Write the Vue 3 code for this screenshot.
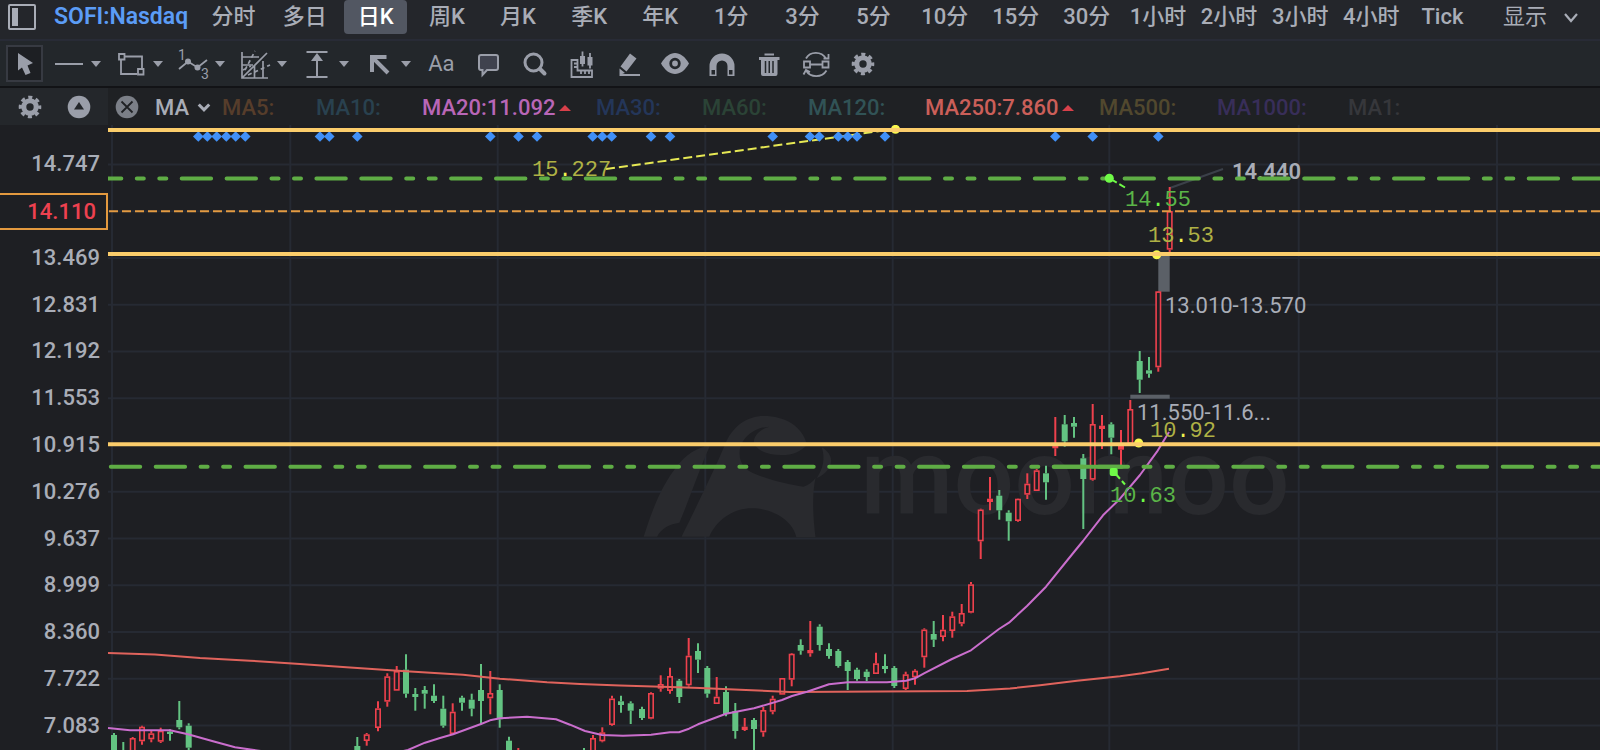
<script setup>
import { ref } from 'vue'

const periods = ['分时', '多日', '日K', '周K', '月K', '季K', '年K', '1分', '3分', '5分', '10分', '15分', '30分', '1小时', '2小时', '3小时', '4小时', 'Tick']
const activePeriod = ref('日K')

const shapeTools = [
  { id: 'line', label: 'Line' },
  { id: 'rect', label: 'Rectangle' },
  { id: 'wave', label: 'Wave' },
  { id: 'gann', label: 'Gann box' },
  { id: 'measure', label: 'Measure' },
  { id: 'arrow', label: 'Arrow' }
]
const actionTools = [
  { id: 'comment', label: 'Comment' },
  { id: 'search', label: 'Zoom' },
  { id: 'ruler', label: 'Ruler' },
  { id: 'pencil', label: 'Pencil' },
  { id: 'eye', label: 'Show drawings' },
  { id: 'magnet', label: 'Magnet' },
  { id: 'trash', label: 'Delete' },
  { id: 'sync', label: 'Sync drawings' },
  { id: 'gear', label: 'Drawing settings' }
]

const averages = [
  { text: 'MA5:', tone: 'ma5' },
  { text: 'MA10:', tone: 'ma10' },
  { text: 'MA20:11.092', tone: 'ma20', up: true },
  { text: 'MA30:', tone: 'ma30' },
  { text: 'MA60:', tone: 'ma60' },
  { text: 'MA120:', tone: 'ma120' },
  { text: 'MA250:7.860', tone: 'ma250', up: true },
  { text: 'MA500:', tone: 'ma500' },
  { text: 'MA1000:', tone: 'ma1000' },
  { text: 'MA1:', tone: 'ma1' }
]

const axis = ['14.747', '14.110', '13.469', '12.831', '12.192', '11.553', '10.915', '10.276', '9.637', '8.999', '8.360', '7.722', '7.083']
const currentPrice = '14.110'

const rows = axis.map((_, i) => 164.4 + i * 46.75)
const columns = [112, 290.3, 497.7, 705.3, 892.7, 1109.3, 1298.7, 1497]
const diamonds = [198.3, 207.3, 216.7, 226.3, 235.7, 245.3, 320, 329.3, 357.3, 490.3, 518.5, 537, 592.7, 602.3, 611.7, 651, 670, 772.7, 810, 819.3, 838.3, 847.7, 857, 885, 1055.3, 1092.7, 1158.3]

// kind (g: falling, r: rising, s: rising with a filled body), x, high, body top, body bottom, low
const candles = [
  ['g', 114, 733, 735, 756, 760], ['g', 123.3, 742, 750, 756, 760], ['r', 132.7, 737, 738, 756, 760],
  ['r', 142, 725.7, 726.7, 741.3, 744.7], ['r', 151.3, 730, 733.3, 739.3, 742.3], ['r', 160.7, 727.7, 730.7, 741.7, 743],
  ['g', 170, 729.3, 731.7, 734, 740.7], ['g', 179.3, 701, 720, 727.3, 729.3], ['g', 188.7, 723.3, 725.7, 747.7, 751],
  ['g', 357.3, 737, 746, 756, 760], ['r', 366.7, 733, 734.3, 741, 745.7], ['r', 378, 701.3, 708.3, 728, 731.3],
  ['r', 387.3, 673.3, 676.3, 701.7, 706.7], ['r', 396.7, 666, 671, 690.7, 690.7], ['g', 406, 654.3, 669.7, 693.7, 697.7],
  ['g', 415.3, 688, 694, 697, 710.7], ['g', 424.7, 686, 690, 693.7, 708.7], ['g', 434, 684.3, 695.7, 701, 703],
  ['g', 443.3, 695.7, 708.7, 725.7, 727.7], ['r', 452.7, 703.3, 711.7, 734, 734], ['g', 462, 695.7, 697.7, 702.7, 710.7],
  ['g', 471.7, 693.7, 699.7, 708.7, 716.3], ['g', 481, 664, 690, 701, 724.7], ['r', 490.3, 671, 693, 698.3, 714.3],
  ['g', 499.7, 684.3, 690, 719.3, 727.7], ['g', 509, 736.7, 740.7, 756, 760], ['r', 518.3, 748, 753, 758, 760],
  ['g', 584, 748, 753, 758, 760], ['r', 593, 735, 738, 756, 760], ['r', 602.3, 727.3, 732.3, 741.3, 742.3],
  ['r', 612, 695.7, 698.5, 725, 725.7], ['g', 621, 695.7, 701.3, 705, 712.7], ['g', 630.7, 701.3, 703.3, 710.7, 724],
  ['g', 642, 706.7, 709, 718, 720], ['r', 651, 692.3, 693, 718.7, 719.3], ['r', 660.7, 675.3, 684, 688.7, 691.7],
  ['r', 670, 667.7, 676, 691, 693.7], ['g', 679.3, 679, 680.7, 697, 703], ['r', 688.7, 638, 655.7, 685.3, 686.7],
  ['g', 698, 643.3, 651, 659.7, 673], ['g', 707.3, 666, 668, 693.7, 697.7], ['r', 716.7, 677, 696.7, 704, 704],
  ['g', 726, 686.3, 692, 714, 716.3], ['g', 735.3, 703, 711, 731, 738.7], ['s', 744.7, 718, 726.7, 730, 731],
  ['g', 754, 718, 720, 729, 750], ['r', 763.3, 707, 710, 732.3, 736.7], ['r', 772.7, 695.7, 698.7, 711.7, 714.3],
  ['r', 782.3, 678, 678, 694.7, 694.7], ['r', 791.7, 653, 653.7, 679.7, 686.3], ['g', 800.7, 639.3, 645, 650.7, 654.7],
  ['s', 810.3, 621, 650, 653.3, 656.7], ['g', 819.7, 624.3, 626.7, 645, 650.7], ['g', 829, 643.3, 649, 656, 658.7],
  ['g', 838.3, 649, 651, 666, 667.7], ['g', 847.7, 660, 662, 671, 690], ['g', 857, 667.7, 669.7, 679, 680.7],
  ['g', 866.7, 669.3, 671.7, 677, 681], ['r', 876, 652.7, 663.3, 674, 674], ['g', 885, 654.3, 666, 669, 673.3],
  ['g', 894.3, 666, 668, 686, 688], ['r', 905.7, 671.7, 674.3, 689, 690], ['r', 915, 669.3, 670.7, 677.3, 684.7],
  ['r', 924.3, 628.3, 629.5, 657.3, 667.7], ['g', 933.7, 621, 634, 639.7, 647], ['r', 943, 615, 629.7, 637, 641.3],
  ['r', 952.3, 611.7, 616.3, 631, 637.7], ['r', 961.7, 604, 613, 623.7, 626.3], ['r', 971, 582, 584.3, 612.7, 613.3],
  ['r', 980.7, 508.7, 509.5, 541.3, 559], ['s', 990, 477, 498.7, 502, 510.3], ['g', 999.3, 490, 495.7, 510.3, 519.7],
  ['g', 1008.7, 510.3, 512.7, 521.3, 540.7], ['r', 1018, 498.5, 498.7, 521, 521.7], ['r', 1027.3, 473.3, 483.7, 494.7, 499],
  ['r', 1036.7, 469, 470.3, 491, 491], ['g', 1046, 465.7, 473.3, 482.3, 499.7], ['s', 1055.3, 417, 445, 448.3, 456],
  ['g', 1064.7, 415, 424.3, 441.3, 446.7], ['g', 1074, 417, 423, 426.7, 437.7], ['g', 1083.3, 454, 458.3, 479, 529],
  ['r', 1092.7, 404, 424, 479.7, 480.7], ['s', 1102, 415, 425.7, 429, 449], ['g', 1111.3, 422.3, 424.3, 437.7, 454.3],
  ['s', 1121, 430, 446, 449.7, 466.7], ['r', 1130.3, 400, 409, 444, 444], ['g', 1139.7, 351, 361, 379.7, 393],
  ['g', 1149, 357, 370.3, 373.7, 377.7], ['r', 1158.3, 291, 291.3, 367.3, 371.7], ['r', 1169.7, 187, 211, 249.7, 252.3]
]

const ma250 = '108,653 155,654.5 200,658 250,660.7 300,664 350,667.5 398,670.7 463,674.7 500,678.7 547,682.3 580,684 620,685.5 670,687 700,688 740,689.7 790,692 880,691.5 967,691 1010,688.5 1040,685.3 1077,680.7 1120,676.3 1142,673.3 1169,668.7'
const ma20 = '108,728 130,730.3 170,730.3 188,734.3 213,741.3 235,747.3 257,750.5 300,756 380,756 408,750 425,742.7 440,738 453,734.3 481,724 490,720.3 500,718.3 527,716.7 556,719.3 570,724.7 585,731 602,735 623,735.7 651,734.7 670,732.3 679,732.3 689,728.7 698,724.3 726,713.7 754,708.3 782,700 792,696 807,691.7 829,684.3 848,682.3 887,682.3 906,680.7 915,678.3 924,673.3 952,659 971,650.3 999,629 1009,622.7 1027,606 1046,586.7 1074,552 1083,541 1103,515.3 1120,498.7 1140,475 1157,451.7 1169,432'
</script>

<template>
  <div class="app">
    <svg class="defs" aria-hidden="true">
      <symbol id="i-cursor" viewBox="0 0 32 32"><path fill="currentColor" d="M9 5V22.500L13 19.500L16.500 27L21.500 25L18.500 17.500L24 15Z" /></symbol>
      <symbol id="i-line" viewBox="0 0 32 32"><path stroke="currentColor" stroke-width="2" d="M2 16H30" /></symbol>
      <symbol id="i-rect" viewBox="0 0 32 32">
        <g fill="none" stroke="currentColor" stroke-width="1.800"><path d="M10 8.500H27V21M22 26H6V12" /><path d="M4 6H9.500V11.500H4ZM23 21H28.500V26.500H23Z" /></g>
      </symbol>
      <symbol id="i-wave" viewBox="0 0 32 32">
        <path fill="none" stroke="currentColor" stroke-width="1.800" d="M2 21L11 13.500L20.500 19.500L30 12" />
        <circle cx="11" cy="13.500" r="3" fill="currentColor" /><circle cx="20.500" cy="19.500" r="3" fill="currentColor" />
      </symbol>
      <symbol id="i-gann" viewBox="0 0 32 32">
        <g fill="none" stroke="currentColor" stroke-width="1.700">
          <path d="M3 4V30H29M3 9H20M24 13V30M3 17H14M15.500 17V30M3 30L28 5" />
          <path stroke-dasharray="4 3" d="M6 22L16 3M9 27L31 17M4 22L12 18" />
        </g>
      </symbol>
      <symbol id="i-measure" viewBox="0 0 32 32"><path stroke="currentColor" stroke-width="2" d="M5.500 4H26.500M5.500 29H26.500M16 8V29" /><path fill="currentColor" d="M16 5L22 13H10Z" /></symbol>
      <symbol id="i-arrow" viewBox="0 0 32 32"><path fill="none" stroke="currentColor" stroke-width="4" d="M23.500 9H9V24M10 10L25 25" /></symbol>
      <symbol id="i-comment" viewBox="0 0 32 32"><path fill="#3f424e" stroke="currentColor" stroke-width="2" d="M9 7H24Q26 7 26 9V20Q26 22 24 22H15L10.500 27V22H9Q7 22 7 20V9Q7 7 9 7Z" /></symbol>
      <symbol id="i-search" viewBox="0 0 32 32"><circle cx="14.500" cy="14.500" r="8.500" fill="none" stroke="currentColor" stroke-width="3" /><path stroke="currentColor" stroke-width="4" stroke-linecap="round" d="M21 21L25.500 25.500" /></symbol>
      <symbol id="i-ruler" viewBox="0 0 32 32">
        <path fill="none" stroke="currentColor" stroke-width="1.800" d="M5.500 12H11.500V22.500H26V29H5.500ZM8 15.500H11M8 19H11M15 23V26M19 23V26M23 23V26M16.500 3.500V18.500M24 5V20.500" />
        <path fill="currentColor" d="M14 8H19V16H14ZM21.500 9H26.500V17.500H21.500Z" />
      </symbol>
      <symbol id="i-pencil" viewBox="0 0 32 32"><path fill="currentColor" d="M17 5.500L23.500 10.500L13.500 23.500L7.500 18.500ZM6.500 20.500L12 25L6.500 27ZM6.500 26H27V28H6.500Z" /></symbol>
      <symbol id="i-eye" viewBox="0 0 32 32">
        <path fill="currentColor" d="M2 15.500C6 8.500 11 5 16 5S26 8.500 30 15.500C26 22.500 21 26 16 26S6 22.500 2 15.500Z" />
        <circle cx="16" cy="15.500" r="4.300" fill="none" stroke="#23272b" stroke-width="2.800" />
      </symbol>
      <symbol id="i-magnet" viewBox="0 0 32 32">
        <path fill="currentColor" d="M3.500 28V18A12.500 12.500 0 0 1 28.500 18V28H21.500V18A5.500 5.500 0 0 0 10.500 18V28Z" />
        <path fill="#23272b" d="M5.500 22H9V26.500H5.500ZM23 22H26.500V26.500H23Z" />
      </symbol>
      <symbol id="i-trash" viewBox="0 0 32 32">
        <path fill="currentColor" d="M11.500 5.500H21V7.500H11.500ZM6 9H26.500V12H6ZM8 12H24.500V26Q24.500 28 22.500 28H10Q8 28 8 26Z" />
        <path stroke="#23272b" stroke-width="1.500" d="M12.500 13V25M16.250 13V25M20 13V25" />
      </symbol>
      <symbol id="i-sync" viewBox="0 0 32 32">
        <path fill="none" stroke="currentColor" stroke-width="1.800" d="M4 13.500H10V19.500H4ZM22.500 13.500H28.500V19.500H22.500ZM10 16.500H22.500M6 10.500C10 3 21.500 3 26 10.500M28.500 6V10.500H23.500M26.500 22.500C22 30 10.500 30 6 22.500M3.500 26.500L6 22L10 24" />
      </symbol>
      <symbol id="i-gear" viewBox="0 0 32 32">
        <circle cx="16" cy="16" r="6.200" fill="none" stroke="currentColor" stroke-width="5" />
        <circle cx="16" cy="16" r="9.600" fill="none" stroke="currentColor" stroke-width="3.400" stroke-dasharray="4 3.540" stroke-dashoffset="2" />
      </symbol>
      <symbol id="i-up" viewBox="0 0 32 32"><circle cx="16" cy="16" r="11.300" fill="currentColor" /><path fill="#24272b" d="M16 11L21 18.500H11Z" /></symbol>
      <symbol id="i-close" viewBox="0 0 32 32"><circle cx="16" cy="16" r="11.300" fill="#7b7f87" /><path stroke="#1f2124" stroke-width="1.800" d="M10.500 10.500L21.500 21.500M21.500 10.500L10.500 21.500" /></symbol>
      <symbol id="i-panel" viewBox="0 0 32 32"><rect x="3" y="4" width="26" height="24" rx="1" fill="none" stroke="currentColor" stroke-width="2" /><path fill="currentColor" d="M6 7H12V25H6Z" /></symbol>
    </svg>

    <header class="topbar">
      <div class="symbol">
        <button class="plain" aria-label="Toggle side panel"><svg class="icon"><use href="#i-panel" /></svg></button>
        <a href="#" class="ticker">SOFI:Nasdaq</a>
      </div>
      <nav class="periods" aria-label="Period">
        <button v-for="p in periods" :key="p" class="period" :class="{ active: p === activePeriod }" @click="activePeriod = p">{{ p }}</button>
      </nav>
      <button class="display">显示
        <svg class="chev" viewBox="0 0 16 16"><path fill="none" stroke="currentColor" stroke-width="2.200" d="M2 5L8 12L14 5" /></svg>
      </button>
    </header>

    <div class="tools" role="toolbar" aria-label="Drawing tools">
      <button class="cursor" aria-label="Select"><svg class="icon"><use href="#i-cursor" /></svg></button>
      <div class="shapes">
        <button v-for="t in shapeTools" :key="t.id" class="shape" :aria-label="t.label">
          <svg class="icon"><use :href="'#i-' + t.id" /></svg>
          <template v-if="t.id === 'wave'">
            <span class="wave-start">1</span>
            <span class="wave-end">3</span>
          </template>
          <span class="caret"></span>
        </button>
      </div>
      <div class="actions">
        <button class="action text-tool">Aa</button>
        <button v-for="t in actionTools" :key="t.id" class="action" :aria-label="t.label">
          <svg class="icon"><use :href="'#i-' + t.id" /></svg>
        </button>
      </div>
    </div>

    <div class="indicators">
      <div class="corner">
        <button class="plain" aria-label="Indicator settings"><svg class="icon"><use href="#i-gear" /></svg></button>
        <button class="plain" aria-label="Collapse"><svg class="icon"><use href="#i-up" /></svg></button>
      </div>
      <button class="plain close" aria-label="Remove indicator"><svg class="icon"><use href="#i-close" /></svg></button>
      <button class="kind">MA
        <svg class="chev" viewBox="0 0 16 16"><path fill="none" stroke="currentColor" stroke-width="3.500" d="M2 4L8 10L14 4" /></svg>
      </button>
      <div class="averages">
        <span v-for="a in averages" :key="a.text" :class="a.tone">{{ a.text }}<i v-if="a.up" class="up"></i></span>
      </div>
    </div>

    <main class="chart">
      <div class="axis">
        <div v-for="v in axis" :key="v" class="tick">
          <span :class="{ current: v === currentPrice }">{{ v }}</span>
        </div>
      </div>
      <svg class="plot" role="img" aria-label="SOFI daily chart">
        <g transform="translate(-108 -125)">
          <g class="grid">
            <line v-for="y in rows" :key="y" x1="108" :y1="y" x2="110%" :y2="y" />
            <line v-for="x in columns" :key="x" :x1="x" y1="125" :x2="x" y2="130%" />
          </g>

          <g class="mark">
            <g transform="translate(620 390) scale(0.4464 0.3333)">
              <path d="M53 440C70 370 90 290 130 225C148 195 170 174 202 166C180 230 155 330 133 398C112 402 92 415 83 440Z" />
              <path d="M235 165C250 110 285 78 322 78C370 78 410 110 419 165C402 187 385 196 360 195C332 193 310 186 300 160C298 140 312 118 335 110C300 112 270 145 268 185C266 225 285 243 303 252C335 270 380 285 411 290C422 285 432 276 438 264C430 310 432 380 438 442H395C388 395 345 355 295 355C250 355 215 395 200 440H138C160 380 208 250 235 165Z" />
              <path d="M452 172C470 185 478 210 470 228C463 248 452 258 441 264C455 236 460 205 452 172Z" />
            </g>
            <text x="1075" y="514" text-anchor="middle">moomoo</text>
          </g>

          <line class="pointer" x1="1170" y1="188" x2="1223" y2="169" />
          <text class="note strong" x="1232" y="179">14.440</text>

          <rect class="gap" x="1158.300" y="255" width="11.400" height="36.700" />
          <rect class="gap" x="1130.300" y="394.700" width="39.400" height="4" />

          <g v-for="c in candles" :key="c[1]" :class="c[0] === 'g' ? 'down' : 'rise'">
            <line v-if="c[3] > c[2]" :x1="c[1]" :y1="c[2]" :x2="c[1]" :y2="c[3]" />
            <line v-if="c[5] > c[4]" :x1="c[1]" :y1="c[4]" :x2="c[1]" :y2="c[5]" />
            <rect v-if="c[0] === 'r'" class="hollow" :x="c[1] - 2.2" :y="c[3] + 0.8" width="4.400" :height="c[4] - c[3] - 1.6" />
            <rect v-else class="solid" :x="c[1] - 3" :y="c[3]" width="6" :height="c[4] - c[3]" />
          </g>

          <polyline class="avg250" :points="ma250" />
          <polyline class="avg20" :points="ma20" />

          <text class="note" x="1165" y="313">13.010-13.570</text>
          <text class="note" x="1137" y="420">11.550-11.6...</text>

          <line class="yellow-dash" x1="606" y1="169" x2="895" y2="129" />
          <path v-for="x in diamonds" :key="x" class="diamond" :d="`M${x} 131.200L${x + 5.3} 136.500L${x} 141.800L${x - 5.3} 136.500Z`" />

          <g class="yellow-dot">
            <circle cx="895.500" cy="129.300" r="4.500" /><circle cx="1156.700" cy="254.700" r="4.500" /><circle cx="1138.700" cy="443" r="4.500" />
          </g>
          <line class="level" x1="108" y1="130" x2="110%" y2="130" />
          <line class="level" x1="108" y1="254" x2="110%" y2="254" />
          <line class="level" x1="108" y1="444.300" x2="110%" y2="444.300" />

          <line class="green" stroke-dashoffset="61" x1="108" y1="178.500" x2="110%" y2="178.500" />
          <line class="green" stroke-dashoffset="131.900" x1="108" y1="466.700" x2="110%" y2="466.700" />
          <line class="green-solid" x1="1054" y1="466.700" x2="1122" y2="466.700" />
          <line class="price" x1="109" y1="211.300" x2="110%" y2="211.300" />

          <g class="green-dot">
            <line x1="1109" y1="178" x2="1125" y2="187.500" /><line x1="1114" y1="472" x2="1125" y2="484.500" />
            <circle cx="1109.300" cy="178.200" r="4.500" /><rect x="1109.700" y="468" width="8" height="8" rx="2" />
          </g>

          <g class="label yellow">
            <text x="532" y="176">15<tspan>.</tspan>227</text>
            <text x="1148" y="242">13<tspan>.</tspan>53</text>
            <text x="1150" y="437">10<tspan>.</tspan>92</text>
          </g>
          <g class="label lime">
            <text x="1125" y="206">14<tspan>.</tspan>55</text>
            <text x="1110" y="502">10<tspan>.</tspan>63</text>
          </g>
        </g>
      </svg>
    </main>
  </div>
</template>

<style>
body {
  background: #1e1f23;
}
</style>

<style scoped>
.app {
  display: flex;
  flex-direction: column;
  min-height: 100vh;
  color: #a9adb7;
  background: #1e1f23;
  font-family: Roboto, "Noto Sans CJK SC", sans-serif;
  font-size: 22px;
  line-height: 26px;
  overflow: hidden;
}
.defs {
  position: absolute;
  width: 0;
  height: 0;
}
button {
  display: flex;
  align-items: center;
  justify-content: center;
  padding: 0;
  border: 0;
  background: none;
  color: inherit;
  font: inherit;
  white-space: nowrap;
  cursor: pointer;
}
.icon {
  display: block;
  flex: none;
  width: 32px;
  height: 32px;
}
.chev {
  width: 16px;
  height: 16px;
}
.topbar {
  display: flex;
  align-items: flex-start;
  box-sizing: border-box;
  height: 41px;
  border-bottom: 2px solid #282b36;
  background: #24262b;
}
.symbol {
  display: flex;
  align-items: center;
  gap: 16px;
  flex: 0 0 198px;
  box-sizing: border-box;
  height: 34px;
  padding-left: 6px;
}
.ticker {
  color: #5b9cf6;
  font-size: 23px;
  font-weight: 600;
  text-decoration: none;
}
.periods {
  display: flex;
  flex: 1;
}
.period {
  flex: 1 1 0;
  height: 34px;
  margin: 0 4px;
  border-radius: 4px;
  font-weight: 500;
}
.period.active {
  background: #525762;
  color: #fff;
}
.display {
  flex: 0 0 122px;
  box-sizing: border-box;
  gap: 16px;
  height: 34px;
  padding-left: 4px;
}
.tools {
  display: flex;
  align-items: center;
  height: 45px;
  padding-left: 6px;
  border-bottom: 2px solid #121316;
  background: #23272b;
  color: #9a9ea9;
}
.cursor {
  box-sizing: border-box;
  width: 37px;
  height: 37px;
  border: 2px solid #373a42;
  background: #1d1f23;
}
.shapes {
  display: flex;
  gap: 14px;
  margin-left: 10px;
}
.shape {
  position: relative;
  width: 48px;
  gap: 6px;
}
.wave-start,
.wave-end {
  position: absolute;
  font-size: 14px;
  line-height: 14px;
}
.wave-start {
  top: 0;
  left: 1px;
}
.wave-end {
  top: 19px;
  left: 24px;
}
.caret {
  border: 5px solid transparent;
  border-top: 6px solid #9a9ea9;
  border-bottom: 0;
}
.actions {
  display: flex;
  width: 468px;
  margin-left: 7px;
}
.action {
  flex: 1 1 0;
}
.indicators {
  display: flex;
  align-items: center;
  height: 37px;
  background: #1f2124;
  font-weight: 500;
  white-space: nowrap;
}
.corner {
  display: flex;
  align-items: center;
  gap: 17px;
  flex: 0 0 108px;
  box-sizing: border-box;
  height: 37px;
  padding-left: 14px;
  background: #24272b;
  color: #9a9ea9;
}
.close {
  margin-left: 3px;
}
.kind {
  gap: 8px;
  width: 56px;
  margin-left: 12px;
  padding-top: 2px;
  justify-content: space-between;
}
.averages {
  display: grid;
  grid-template-columns: 94px 106px 174px 106px 106px 117px 174px 118px 131px auto;
  margin-left: 11px;
  padding-top: 2px;
}
.up {
  display: inline-block;
  margin-left: 4px;
  vertical-align: 4px;
  border: 6px solid transparent;
  border-top: 0;
  border-bottom: 6px solid #d8404a;
}
.ma5 { color: #563d2b; }
.ma10 { color: #29414f; }
.ma20 { color: #b966b7; }
.ma30 { color: #243659; }
.ma60 { color: #2b4336; }
.ma120 { color: #315356; }
.ma250 { color: #cb5f59; }
.ma500 { color: #51482e; }
.ma1000 { color: #382e59; }
.ma1 { color: #36373b; }
.chart {
  display: flex;
  flex: 1 0 625px;
}
.axis {
  display: grid;
  grid-auto-rows: 1fr;
  flex: 0 0 108px;
  box-sizing: border-box;
  height: 625px;
  padding: 16px 0 1px;
  font-weight: 500;
}
.tick {
  display: flex;
  align-items: center;
}
.tick span {
  flex: 1;
  padding-right: 8px;
  text-align: right;
}
.tick .current {
  padding: 0 10px 0 0;
  border: 2px solid #e3993f;
  border-left: 0;
  color: #ee4150;
  line-height: 33px;
}
.plot {
  flex: 1;
  min-width: 0;
  align-self: stretch;
}
.grid line {
  stroke: #262a33;
  stroke-width: 2;
}
.mark {
  fill: #292a2e;
}
.mark text {
  font-size: 107px;
  font-weight: 500;
}
.pointer {
  stroke: #3b4049;
  stroke-width: 2;
}
.note {
  fill: #a9adb7;
}
.strong {
  font-weight: 600;
}
.gap {
  fill: #5b6067;
}
.rise {
  stroke: #ee414d;
  fill: #ee414d;
}
.down {
  stroke: #63c382;
  fill: #63c382;
}
.rise line,
.down line {
  stroke-width: 2;
}
.rise .hollow {
  fill: #1e1f23;
  stroke-width: 1.6;
}
.solid {
  stroke: none;
}
.avg20,
.avg250 {
  fill: none;
  stroke-width: 2;
  stroke-linejoin: round;
}
.avg20 {
  stroke: #ca6ecd;
}
.avg250 {
  stroke: #e0635c;
}
.diamond {
  fill: #4190f7;
}
.level {
  stroke: #fbcd6b;
  stroke-width: 4;
}
.yellow-dash {
  stroke: #e6e854;
  stroke-width: 2;
  stroke-dasharray: 9 4;
}
.yellow-dot {
  fill: #f9f74e;
}
.green,
.green-solid {
  stroke: #5fad45;
  stroke-width: 4;
  stroke-linecap: round;
}
.green {
  stroke-dasharray: 29.4 15.5 29.4 15.5 7 15.5 7 15.4;
}
.price {
  stroke: #e39a42;
  stroke-width: 2;
  stroke-dasharray: 9 4;
}
.green-dot {
  fill: #6ffb47;
  stroke: none;
}
.green-dot line {
  stroke: #6ffb47;
  stroke-width: 2;
  stroke-dasharray: 9 3;
}
.label {
  font-family: "Liberation Mono", monospace;
}
.yellow {
  fill: #afb145;
}
.yellow tspan {
  fill: #f0f250;
}
.lime {
  fill: #5bb548;
}
.lime tspan {
  fill: #6ffb47;
}
</style>
